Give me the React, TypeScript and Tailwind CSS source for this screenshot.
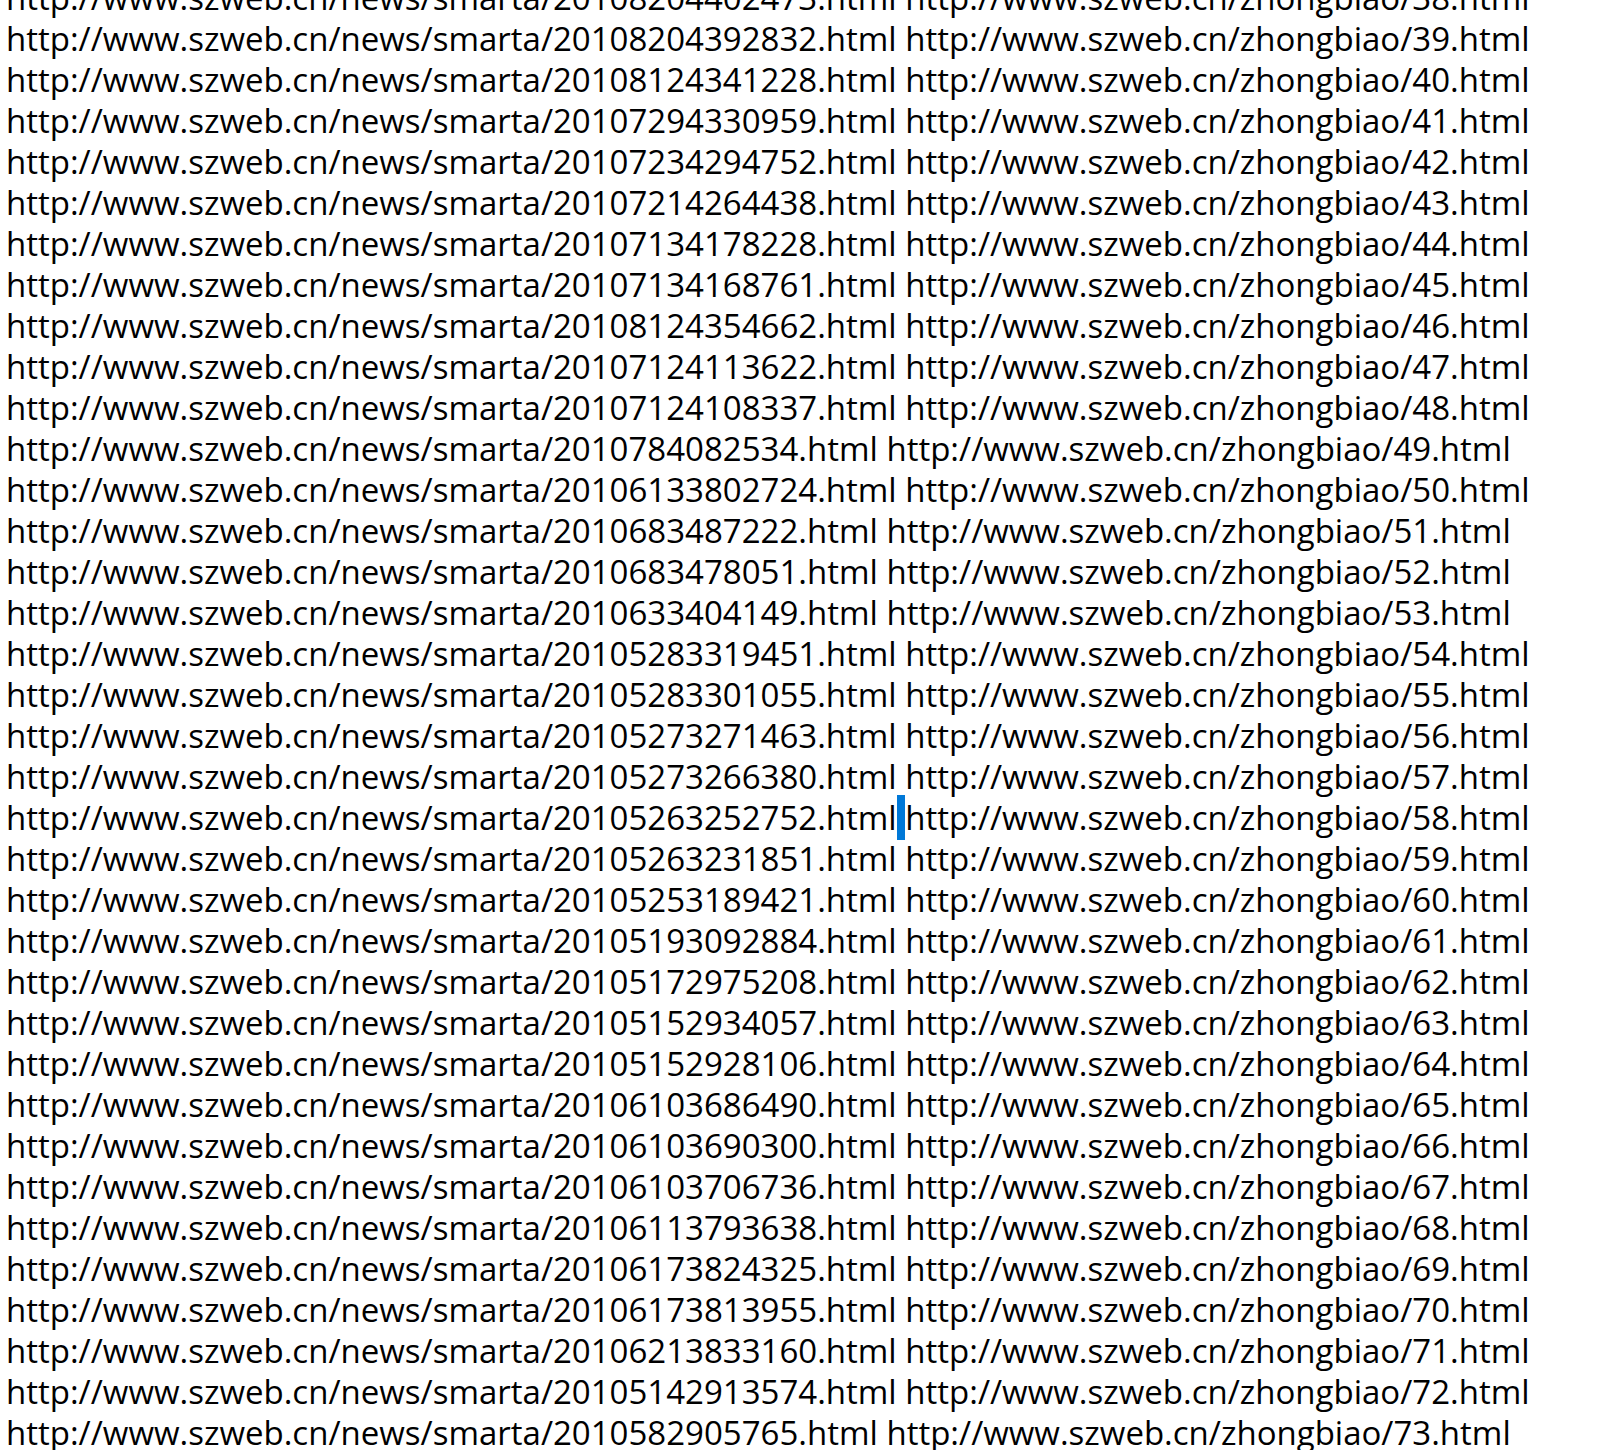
const rows: [string, number][] = [
  ["20108204402473", 38],
  ["20108204392832", 39],
  ["20108124341228", 40],
  ["20107294330959", 41],
  ["20107234294752", 42],
  ["20107214264438", 43],
  ["20107134178228", 44],
  ["20107134168761", 45],
  ["20108124354662", 46],
  ["20107124113622", 47],
  ["20107124108337", 48],
  ["2010784082534", 49],
  ["20106133802724", 50],
  ["2010683487222", 51],
  ["2010683478051", 52],
  ["2010633404149", 53],
  ["20105283319451", 54],
  ["20105283301055", 55],
  ["20105273271463", 56],
  ["20105273266380", 57],
  ["20105263252752", 58],
  ["20105263231851", 59],
  ["20105253189421", 60],
  ["20105193092884", 61],
  ["20105172975208", 62],
  ["20105152934057", 63],
  ["20105152928106", 64],
  ["20106103686490", 65],
  ["20106103690300", 66],
  ["20106103706736", 67],
  ["20106113793638", 68],
  ["20106173824325", 69],
  ["20106173813955", 70],
  ["20106213833160", 71],
  ["20105142913574", 72],
  ["2010582905765", 73],
];

export default function App() {
  return (
    <div className="h-[1450px] w-full overflow-hidden bg-white">
      <div className="-mt-[23px] pl-[6px] font-['Open_Sans',sans-serif] text-[33px] leading-[41px] text-black whitespace-pre">
        {rows.map(([id, n]) => (
          <div key={n}>
            {`http://www.szweb.cn/news/smarta/${id}.html`}
            {n === 58 ? <span className="bg-[#0078d7]"> </span> : " "}
            {`http://www.szweb.cn/zhongbiao/${n}.html`}
          </div>
        ))}
      </div>
    </div>
  );
}
